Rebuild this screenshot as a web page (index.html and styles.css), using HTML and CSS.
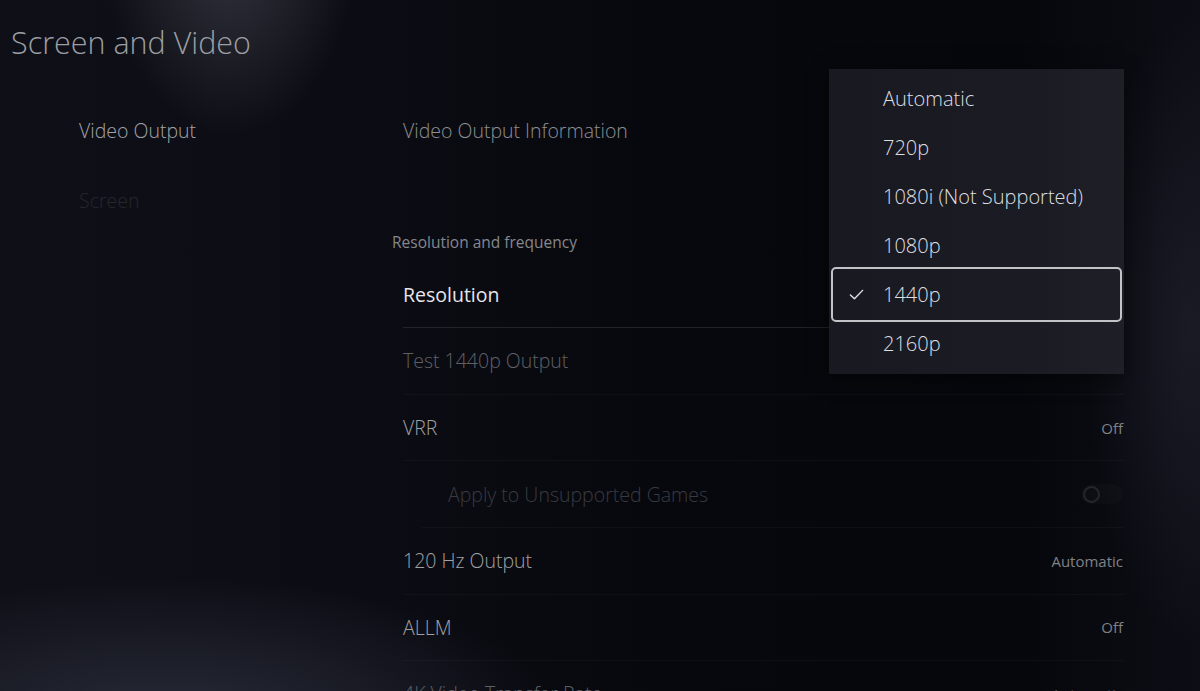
FILE: index.html
```html
<!DOCTYPE html>
<html lang="en">
<head>
    <meta charset="UTF-8">
    <meta name="viewport" content="width=device-width, initial-scale=1.0">
    <title>Screen and Video</title>
    <link rel="stylesheet" href="styles.css">
</head>
<body>
    <div class="screen">
        <h1 class="title">Screen and Video</h1>

        <div class="layout">
            <nav class="side">
                <div class="side-item active">Video Output</div>
                <div class="side-item dim">Screen</div>
            </nav>

            <main class="content">
                <div class="row info">
                    <span class="label">Video Output Information</span>
                </div>

                <div class="section">Resolution and frequency</div>

                <div class="row focused">
                    <span class="label">Resolution</span>
                </div>
                <div class="row faded">
                    <span class="label">Test 1440p Output</span>
                </div>
                <div class="row">
                    <span class="label">VRR</span>
                    <span class="value">Off</span>
                </div>
                <div class="row sub faded">
                    <span class="label">Apply to Unsupported Games</span>
                    <span class="toggle"><span class="knob"></span></span>
                </div>
                <div class="row">
                    <span class="label">120 Hz Output</span>
                    <span class="value">Automatic</span>
                </div>
                <div class="row">
                    <span class="label">ALLM</span>
                    <span class="value">Off</span>
                </div>
                <div class="row faded">
                    <span class="label">4K Video Transfer Rate</span>
                    <span class="value">Automatic</span>
                </div>
            </main>
        </div>

        <ul class="dropdown">
            <li class="option">Automatic</li>
            <li class="option">720p</li>
            <li class="option">1080i (Not Supported)</li>
            <li class="option">1080p</li>
            <li class="option selected">
                <svg class="check" viewBox="0 0 16 16" width="15" height="15">
                    <path d="M1.5 8.5 L5.8 12.6 L14.5 3.6" fill="none" stroke="currentColor" stroke-width="1.5" stroke-linecap="round" stroke-linejoin="round"/>
                </svg>
                1440p
            </li>
            <li class="option">2160p</li>
        </ul>
    </div>
</body>
</html>
```

FILE: styles.css
```css
* {
    box-sizing: border-box;
}
html, body {
    margin: 0;
    height: 100%;
}
body {
    font-family: "Open Sans", "Noto Sans", sans-serif;
    font-weight: 300;
    color: #a0a1a6;
    overflow: hidden;
    background:
        radial-gradient(ellipse 170px 260px at 230px -60px, rgba(98, 100, 112, 0.45), transparent 75%),
        radial-gradient(ellipse 520px 190px at 170px 720px, rgba(44, 47, 62, 0.85), transparent 75%),
        radial-gradient(ellipse 140px 420px at 1190px 330px, rgba(38, 40, 52, 0.5), transparent 75%),
        linear-gradient(90deg, #0f1017 0%, #0c0d14 30%, #07080d 55%, #06070c 85%, #0d0e15 100%);
}
.screen {
    position: relative;
    width: 1200px;
    height: 691px;
}
.title {
    margin: 0 0 38px;
    padding: 25px 0 0 11px;
    font-size: 30.5px;
    line-height: 34px;
    font-weight: 300;
    color: #9c9ea4;
}
.layout {
    display: grid;
    grid-template-columns: 392px 732px;
}
.side {
    padding-left: 79px;
}
.side-item {
    height: 66px;
    margin-bottom: 4px;
    display: flex;
    align-items: center;
    font-size: 19.5px;
}
.side-item.active {
    color: #a2a3a9;
}
.side-item.dim {
    color: #25262e;
}
.content {
    display: flex;
    flex-direction: column;
}
.row {
    height: 66.6px;
    display: flex;
    align-items: center;
    justify-content: space-between;
    margin-left: 11px;
    padding-right: 1px;
    border-bottom: 1px solid rgba(255, 255, 255, 0.03);
    font-size: 19.5px;
}
.row.info {
    border-bottom: none;
    color: #8c8e94;
}
.row.focused {
    color: #e6e6e9;
    font-weight: 400;
    border-bottom-color: rgba(255, 255, 255, 0.1);
}
.row.faded {
    color: #5f6066;
}
.row.sub {
    color: #393a41;
    margin-left: 30px;
    padding-left: 26px;
}
.section {
    margin-top: 68px;
    margin-bottom: 10px;
    line-height: 20px;
    font-size: 15.5px;
    font-weight: 400;
    color: #85878d;
}
.value {
    font-size: 15px;
    font-weight: 400;
    color: #808187;
}
.row.faded .value {
    color: #4a4b51;
}
.toggle {
    width: 42px;
    height: 20px;
    border-radius: 10px;
    background: rgba(255, 255, 255, 0.02);
    display: flex;
    align-items: center;
    padding-left: 2px;
}
.knob {
    width: 17px;
    height: 17px;
    border-radius: 50%;
    border: 2px solid #25262d;
}
.dropdown {
    position: absolute;
    left: 829px;
    top: 69px;
    width: 295px;
    height: 305px;
    margin: 0;
    padding: 4.5px 0 0;
    list-style: none;
    background: linear-gradient(90deg, #191a21, #1b1c23 70%, #1f2027);
    box-shadow: 0 4px 18px rgba(0, 0, 0, 0.5);
}
.option {
    position: relative;
    height: 49px;
    margin: 0 5px;
    padding-left: 49px;
    display: flex;
    align-items: center;
    font-size: 20px;
    color: #dedee2;
}
.option.selected {
    outline: 2px solid #c2c2c7;
    outline-offset: 1px;
    border-radius: 2px;
}
.check {
    position: absolute;
    left: 15px;
    top: 17px;
    color: #e2e2e6;
}
```
